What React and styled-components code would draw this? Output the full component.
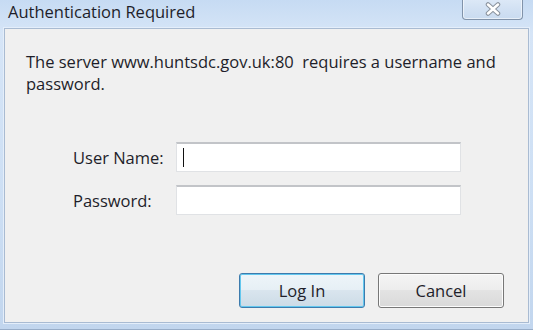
import React from 'react'
import styled, { createGlobalStyle } from 'styled-components'

const GlobalStyle = createGlobalStyle`
  html, body {
    margin: 0;
    padding: 0;
    background: #cfe0f4;
  }
  body {
    font-family: "Open Sans", "Liberation Sans", sans-serif;
  }
`

export default function App() {
  return (
    <>
      <GlobalStyle />
      <Window>
        <TitleBar>
          <Title>Authentication Required</Title>
          <CloseButton aria-label="Close">
            <svg width="20" height="14" viewBox="0 0 20 14">
              <path
                d="M5 2.5 L15 11.5 M15 2.5 L5 11.5"
                stroke="#8a939e"
                strokeWidth="4.5"
                strokeLinecap="round"
                fill="none"
              />
              <path
                d="M5 2.5 L15 11.5 M15 2.5 L5 11.5"
                stroke="#ffffff"
                strokeWidth="2.5"
                strokeLinecap="round"
                fill="none"
              />
            </svg>
          </CloseButton>
        </TitleBar>
        <Panel>
          <Message>
            The server www.huntsdc.gov.uk:80&nbsp; requires a username and password.
          </Message>
          <Form>
            <Label htmlFor="user">User Name:</Label>
            <Field id="user">
              <Caret />
            </Field>
            <Label htmlFor="pass">Password:</Label>
            <Field id="pass" />
          </Form>
          <Buttons>
            <Button primary>Log In</Button>
            <Button>Cancel</Button>
          </Buttons>
        </Panel>
      </Window>
    </>
  )
}

const Window = styled.div`
  width: 533px;
  height: 330px;
  display: flex;
  flex-direction: column;
  box-sizing: border-box;
  background: linear-gradient(180deg, #c6dbf3 0%, #d6e5f7 10%, #cddff4 60%, #c2d6ee 100%);
  border-bottom: 1px solid #98adc8;
`

const TitleBar = styled.div`
  height: 28px;
  display: flex;
  align-items: flex-start;
  justify-content: space-between;
  padding-left: 8px;
  padding-right: 10px;
`

const Title = styled.div`
  font-size: 16.5px;
  line-height: 16px;
  padding-top: 4px;
  color: #1e1e2a;
`

const CloseButton = styled.div`
  width: 61px;
  height: 21px;
  margin-top: -1px;
  box-sizing: border-box;
  border: 1px solid #8193aa;
  border-top: none;
  border-radius: 0 0 4px 4px;
  background: linear-gradient(180deg, #dde9f7 0%, #d2e1f3 50%, #c9dbf0 100%);
  box-shadow: inset 0 0 0 1px rgba(255, 255, 255, 0.55);
  display: flex;
  align-items: center;
  justify-content: center;
`

const Panel = styled.div`
  flex: 1;
  margin: 0 4px 6px 4px;
  background: #f0f0f0;
  border: 1px solid #a9bbd2;
  box-shadow: 0 0 0 1px #e4eefa;
  display: flex;
  flex-direction: column;
  padding: 22px 24px 14px 21px;
`

const Message = styled.div`
  font-size: 16.5px;
  line-height: 22px;
  color: #1e1e2a;
  width: 480px;
`

const Form = styled.div`
  display: grid;
  grid-template-columns: 103px 285px;
  grid-auto-rows: 30px;
  row-gap: 13px;
  align-items: center;
  margin-top: 47px;
  margin-left: 47px;
`

const Label = styled.label`
  font-size: 16.5px;
  color: #1e1e2a;
`

const Field = styled.div`
  height: 30px;
  box-sizing: border-box;
  background: #ffffff;
  border: 1px solid #e0e2e5;
  border-top: 2px solid #c2c4c8;
  display: flex;
  align-items: center;
  padding-left: 6px;
`

const Caret = styled.div`
  width: 1px;
  height: 19px;
  background: #111111;
`

const Buttons = styled.div`
  margin-top: auto;
  display: flex;
  justify-content: flex-end;
  gap: 13px;
`

const Button = styled.div`
  width: 126px;
  height: 35px;
  box-sizing: border-box;
  border-radius: 3px;
  border: 1px solid ${p => (p.primary ? '#3d7bad' : '#777777')};
  box-shadow: inset 0 0 0 1px ${p => (p.primary ? '#63c7ee' : '#fcfcfc')};
  background: ${p =>
    p.primary
      ? 'linear-gradient(180deg, #eef5f9 0%, #e6eff5 49%, #d9e5ee 50%, #ccdbe6 100%)'
      : 'linear-gradient(180deg, #f4f4f4 0%, #ededed 49%, #e3e3e3 50%, #d9d9d9 100%)'};
  display: flex;
  align-items: center;
  justify-content: center;
  font-size: 16.5px;
  color: #1e1e2a;
`
